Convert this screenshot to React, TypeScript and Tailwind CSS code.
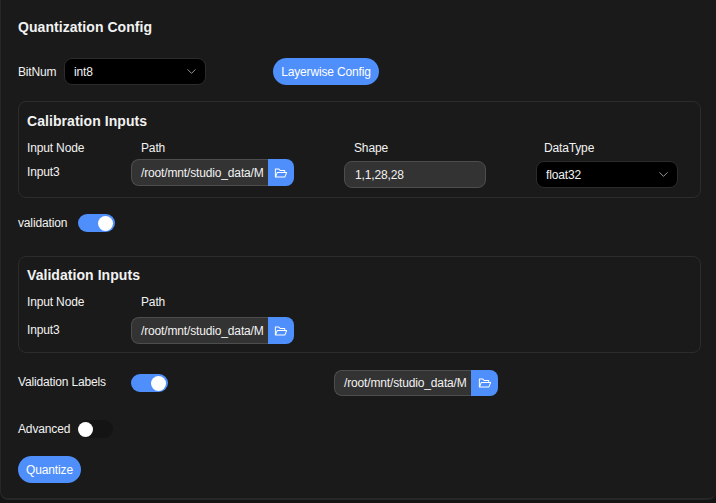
import { ChevronDown } from "lucide-react";
import { AiOutlineFolderOpen } from "react-icons/ai";

function Toggle({ on }: { on: boolean }) {
  return (
    <span
      className={`flex h-[18px] items-center rounded-full ${
        on ? "w-[37px] justify-end bg-[#4f8ffb] pr-[2px]" : "w-[35px] bg-[#141414]"
      }`}
    >
      <span className="h-[15px] w-[15px] rounded-full bg-white" />
    </span>
  );
}

function SelectBox({ value }: { value: string }) {
  return (
    <div className="flex h-[27px] w-[142px] items-center justify-between rounded-lg border border-[#2c2c2c] bg-black pl-[9px] pr-[6px]">
      <span>{value}</span>
      <ChevronDown className="h-[15px] w-[15px] text-[#a0a0a0]" strokeWidth={1.5} />
    </div>
  );
}

function PathInput({ wide = false }: { wide?: boolean }) {
  return (
    <div className={`flex ${wide ? "h-[26px]" : "h-[27px]"}`}>
      <div className="flex w-[137px] items-center overflow-hidden whitespace-nowrap rounded-l-lg border border-r-0 border-[#4d4d4d] bg-[#333333] pl-[9px]">
        /root/mnt/studio_data/M
      </div>
      <div
        className={`flex items-center justify-center rounded-r-lg bg-[#4f8ffb] ${
          wide ? "w-[27px]" : "w-[26px]"
        }`}
      >
        <AiOutlineFolderOpen className="h-[14px] w-[14px] text-white" />
      </div>
    </div>
  );
}

function Card({ title, tight = false, children }: { title: string; tight?: boolean; children: React.ReactNode }) {
  return (
    <section className={`h-[97px] rounded-lg border border-[#2c2c2c] px-2 ${tight ? "pt-2" : "pt-[9px]"}`}>
      <h3 className="text-sm leading-5 font-bold tracking-[0.06px]">{title}</h3>
      {children}
    </section>
  );
}

export default function App() {
  return (
    <div
      className="h-[503px] w-[716px] overflow-hidden bg-[#141414] text-xs tracking-[-0.15px] text-[#f2f2f2]"
      style={{ fontFamily: '"Liberation Sans", Arial, sans-serif' }}
    >
      <div className="h-[500px] rounded-b-lg border-b-2 border-l border-[#262626] bg-[#1a1a1a] pl-[17px] pr-[15px]">
        <h2 className="pt-[17px] text-sm leading-5 font-bold tracking-[0.06px]">Quantization Config</h2>

        <div className="mt-[21px] flex items-center">
          <span className="w-[46px]">BitNum</span>
          <SelectBox value="int8" />
          <button className="ml-[67px] h-[27px] w-[106px] rounded-full bg-[#4f8ffb] text-center text-white">
            Layerwise Config
          </button>
        </div>

        <div className="mt-4">
          <Card title="Calibration Inputs">
            <div className="mt-[9px] grid grid-cols-[104px_213px_192px_1fr]">
              <span className="leading-[16px]">Input Node</span>
              <span className="pl-[10px] leading-[16px]">Path</span>
              <span className="pl-[10px] leading-[16px]">Shape</span>
              <span className="pl-2 leading-[16px]">DataType</span>
              <span className="mt-[5px] leading-[22px]">Input3</span>
              <div className="mt-[3px]">
                <PathInput />
              </div>
              <div className="mt-[5px] flex h-[27px] w-[142px] items-center rounded-lg border border-[#4d4d4d] bg-[#333333] pl-[10px]">
                1,1,28,28
              </div>
              <div className="mt-[5px]">
                <SelectBox value="float32" />
              </div>
            </div>
          </Card>
        </div>

        <div className="mt-[15px] flex h-[20px] items-center">
          <span className="w-[60px]">validation</span>
          <Toggle on />
        </div>

        <div className="mt-[23px]">
          <Card title="Validation Inputs" tight>
            <div className="mt-[9px] grid grid-cols-[104px_213px]">
              <span className="leading-[16px]">Input Node</span>
              <span className="pl-[10px] leading-[16px]">Path</span>
              <span className="mt-[9px] leading-[22px]">Input3</span>
              <div className="mt-[7px]">
                <PathInput />
              </div>
            </div>
          </Card>
        </div>

        <div className="mt-[17px] flex h-[26px] items-center">
          <span className="w-[113px] pb-[2px]">Validation Labels</span>
          <Toggle on />
          <div className="ml-[166px]">
            <PathInput wide />
          </div>
        </div>

        <div className="mt-[23px] flex h-[20px] items-center">
          <span className="w-[60px]">Advanced</span>
          <Toggle on={false} />
        </div>

        <button className="mt-[17px] block h-[27px] w-[63px] rounded-full bg-[#4f8ffb] text-center text-white">
          Quantize
        </button>
      </div>
    </div>
  );
}
